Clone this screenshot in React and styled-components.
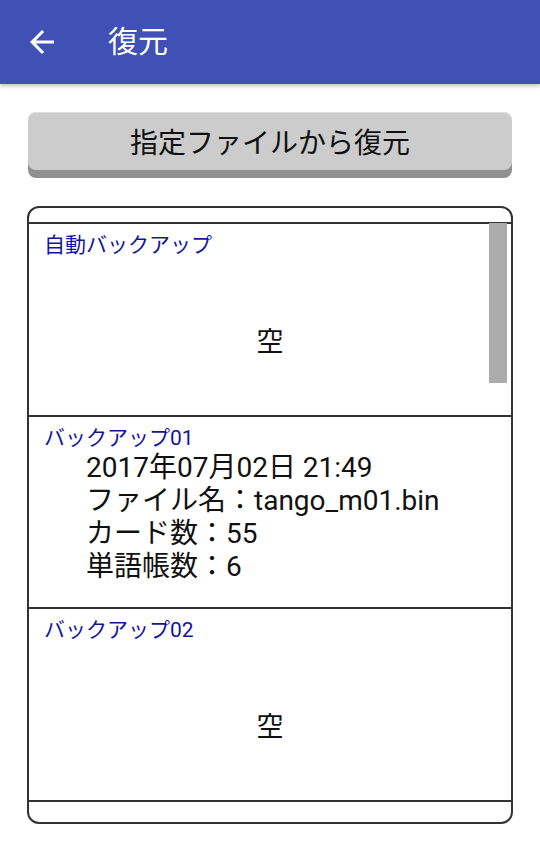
import React from "react";
import styled, { createGlobalStyle } from "styled-components";

const GlobalStyle = createGlobalStyle`
  html, body {
    margin: 0;
    padding: 0;
    background: #fff;
    font-family: Roboto, "Noto Sans CJK JP", sans-serif;
  }
`;

const backups = [
  { title: "自動バックアップ", empty: true },
  {
    title: "バックアップ01",
    lines: [
      "2017年07月02日 21:49",
      "ファイル名：tango_m01.bin",
      "カード数：55",
      "単語帳数：6",
    ],
  },
  { title: "バックアップ02", empty: true },
];

const App = () => {
  return (
    <Page>
      <GlobalStyle />
      <Toolbar>
        <BackButton>
          <svg width="36" height="36" viewBox="0 0 24 24">
            <path
              fill="#fff"
              d="M20 11H7.83l5.59-5.59L12 4l-8 8 8 8 1.41-1.41L7.83 13H20v-2z"
            />
          </svg>
        </BackButton>
        <Title>復元</Title>
      </Toolbar>

      <Content>
        <RestoreButton>指定ファイルから復元</RestoreButton>

        <ListBox>
          <List>
            {backups.map((b) => (
              <Item key={b.title}>
                <ItemTitle>{b.title}</ItemTitle>
                {b.empty ? (
                  <EmptyBody>空</EmptyBody>
                ) : (
                  <Details>
                    {b.lines.map((l) => (
                      <DetailLine key={l}>{l}</DetailLine>
                    ))}
                  </Details>
                )}
              </Item>
            ))}
          </List>
          <ScrollThumb />
        </ListBox>
      </Content>
    </Page>
  );
};

const Page = styled.div`
  width: 540px;
  height: 850px;
  overflow: hidden;
  background: #fff;
`;

const Toolbar = styled.header`
  height: 84px;
  background: #3f51b5;
  display: flex;
  align-items: center;
  box-shadow: 0 2px 4px rgba(0, 0, 0, 0.25);
  position: relative;
  z-index: 1;
`;

const BackButton = styled.div`
  width: 36px;
  height: 36px;
  margin-left: 24px;
  display: flex;
`;

const Title = styled.h1`
  margin: 0 0 0 48px;
  font-size: 30px;
  font-weight: 400;
  color: #fff;
  line-height: 1;
`;

const Content = styled.div`
  padding: 28px 27px 0;
`;

const RestoreButton = styled.div`
  margin: 0 1px;
  height: 58px;
  border-radius: 8px;
  background: #cccccc;
  box-shadow: 0 8px 0 #909090, inset 0 1px 0 #e0e0e0;
  display: flex;
  align-items: center;
  justify-content: center;
  font-size: 28px;
  color: #111;
`;

const ListBox = styled.div`
  position: relative;
  margin-top: 36px;
  height: 618px;
  box-sizing: border-box;
  border: 2px solid #333;
  border-radius: 12px;
  padding-top: 14px;
  overflow: hidden;
`;

const List = styled.div`
  border-top: 2px solid #333;
`;

const Item = styled.div`
  height: 192.5px;
  box-sizing: border-box;
  border-bottom: 2px solid #333;
  display: flex;
  flex-direction: column;
  padding: 8px 15px 0;
`;

const ItemTitle = styled.div`
  font-size: 21px;
  line-height: 26px;
  color: #1414a0;
`;

const EmptyBody = styled.div`
  flex: 1;
  display: flex;
  align-items: center;
  justify-content: center;
  padding-top: 6px;
  font-size: 27px;
  color: #111;
`;

const Details = styled.div`
  padding-left: 42px;
  display: flex;
  flex-direction: column;
`;

const DetailLine = styled.div`
  font-size: 28px;
  line-height: 33px;
  color: #111;
  white-space: pre;
`;

const ScrollThumb = styled.div`
  position: absolute;
  top: 15px;
  right: 4px;
  width: 18px;
  height: 160px;
  background: #ababab;
`;

export default App;
